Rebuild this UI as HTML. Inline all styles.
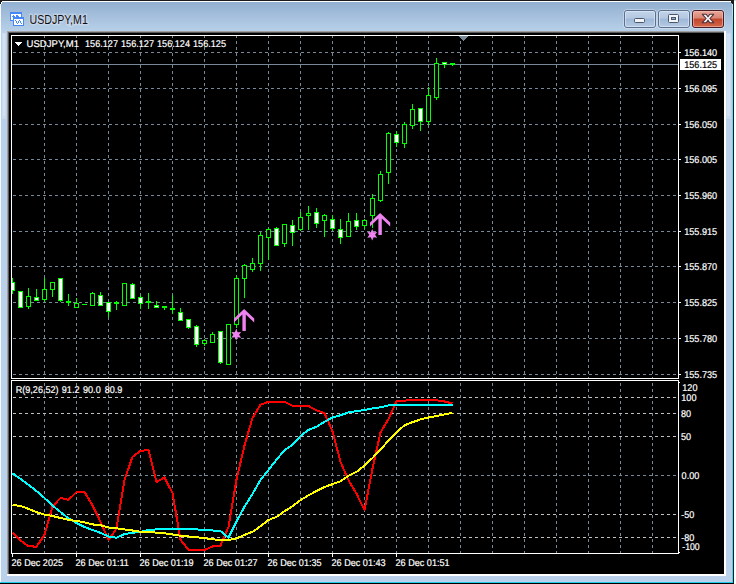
<!DOCTYPE html>
<html lang="en"><head><meta charset="utf-8"><title>USDJPY,M1</title>
<style>
html,body{margin:0;padding:0;background:#fff;overflow:hidden}
body{width:736px;height:584px;position:relative;font-family:"Liberation Sans",sans-serif}
svg{position:absolute;left:0;top:0;display:block}
text{font-family:"Liberation Sans",sans-serif}
.t{font-size:9.33px;fill:#fff}
</style></head><body>
<svg width="736" height="584" viewBox="0 0 736 584">
<defs>
<linearGradient id="tb" x1="0" y1="0" x2="0" y2="1"><stop offset="0" stop-color="#93b0d1"/><stop offset="1" stop-color="#b9d1ea"/></linearGradient>
<linearGradient id="btn" x1="0" y1="0" x2="0" y2="1"><stop offset="0" stop-color="#c3d4e9"/><stop offset="0.45" stop-color="#b4c8e2"/><stop offset="0.5" stop-color="#9fb8d8"/><stop offset="1" stop-color="#b6cbe4"/></linearGradient>
<linearGradient id="cls" x1="0" y1="0" x2="0" y2="1"><stop offset="0" stop-color="#e9a99b"/><stop offset="0.45" stop-color="#d98573"/><stop offset="0.5" stop-color="#c1452b"/><stop offset="1" stop-color="#d4694c"/></linearGradient>
<linearGradient id="side" x1="0" y1="0" x2="0" y2="1"><stop offset="0" stop-color="#d3e1f1"/><stop offset="0.9" stop-color="#cfdef0"/><stop offset="1" stop-color="#b9d1ea"/></linearGradient>
<linearGradient id="cy" x1="0" y1="0" x2="0" y2="1"><stop offset="0" stop-color="#b8f0fc"/><stop offset="0.05" stop-color="#62dcfa"/><stop offset="1" stop-color="#3ad6f6"/></linearGradient>
<clipPath id="cpm"><rect x="12" y="36" width="666" height="342"/></clipPath>
<clipPath id="cpi"><rect x="12" y="381" width="666" height="172"/></clipPath>
</defs>
<g shape-rendering="crispEdges">
<rect x="0" y="0" width="736" height="584" fill="#ffffff"/>
<rect x="0" y="0" width="734" height="1" fill="#1c1c1c"/>
<rect x="0" y="1" width="733" height="581" fill="#b9d1ea"/>
<rect x="0" y="2" width="733" height="30" fill="url(#tb)"/>
<rect x="0" y="1" width="732" height="1" fill="#ffffff"/>
<rect x="0" y="2" width="1" height="580" fill="#f7fafd"/>
<rect x="732" y="3" width="1" height="580" fill="url(#cy)"/>
<rect x="733" y="2" width="1" height="582" fill="#1c1c1c"/>
<rect x="0" y="582" width="733" height="1" fill="#1fcdeb"/>
<rect x="0" y="583" width="734" height="1" fill="#000000"/>
<rect x="2" y="33" width="4" height="86" fill="#c7daee"/><rect x="3" y="34" width="2" height="82" fill="#d3e2f2"/>
<rect x="726" y="33" width="5" height="86" fill="#c7daee"/><rect x="727" y="34" width="3" height="82" fill="#d3e2f2"/>
<rect x="0" y="0" width="2" height="2" fill="#1c1c1c"/><rect x="0" y="2" width="1" height="2" fill="#1c1c1c"/><rect x="2" y="0" width="1" height="1" fill="#1c1c1c"/>
<rect x="1" y="2" width="1" height="2" fill="#ffffff"/><rect x="2" y="1" width="2" height="1" fill="#ffffff"/>
<rect x="731" y="1" width="3" height="2" fill="#1c1c1c"/><rect x="732" y="3" width="1" height="1" fill="#1c1c1c"/>
<rect x="734" y="0" width="2" height="1" fill="#d8d8d8"/>
<rect x="7" y="31" width="719" height="545" fill="#a0a0a0"/>
<rect x="8" y="32" width="718" height="544" fill="#5a5a5a"/>
<rect x="9" y="33" width="717" height="543" fill="#ffffff"/>
<rect x="7" y="575" width="1" height="1" fill="#ffffff"/><rect x="7" y="574" width="2" height="2" fill="#ffffff"/>
<rect x="725" y="31" width="1" height="1" fill="#ffffff"/><rect x="724" y="31" width="2" height="2" fill="#ffffff"/>
<rect x="9" y="33" width="715" height="541" fill="#000000"/>
</g>
<g shape-rendering="crispEdges" fill="none" stroke-width="1">
<line x1="44.5" y1="35" x2="44.5" y2="378" stroke="#778899" stroke-dasharray="3 3"/>
<line x1="44.5" y1="377" x2="44.5" y2="553" stroke="#778899" stroke-dasharray="3 3"/>
<line x1="76.5" y1="35" x2="76.5" y2="378" stroke="#778899" stroke-dasharray="3 3"/>
<line x1="76.5" y1="377" x2="76.5" y2="553" stroke="#778899" stroke-dasharray="3 3"/>
<line x1="108.5" y1="35" x2="108.5" y2="378" stroke="#778899" stroke-dasharray="3 3"/>
<line x1="108.5" y1="377" x2="108.5" y2="553" stroke="#778899" stroke-dasharray="3 3"/>
<line x1="140.5" y1="35" x2="140.5" y2="378" stroke="#778899" stroke-dasharray="3 3"/>
<line x1="140.5" y1="377" x2="140.5" y2="553" stroke="#778899" stroke-dasharray="3 3"/>
<line x1="172.5" y1="35" x2="172.5" y2="378" stroke="#778899" stroke-dasharray="3 3"/>
<line x1="172.5" y1="377" x2="172.5" y2="553" stroke="#778899" stroke-dasharray="3 3"/>
<line x1="204.5" y1="35" x2="204.5" y2="378" stroke="#778899" stroke-dasharray="3 3"/>
<line x1="204.5" y1="377" x2="204.5" y2="553" stroke="#778899" stroke-dasharray="3 3"/>
<line x1="236.5" y1="35" x2="236.5" y2="378" stroke="#778899" stroke-dasharray="3 3"/>
<line x1="236.5" y1="377" x2="236.5" y2="553" stroke="#778899" stroke-dasharray="3 3"/>
<line x1="268.5" y1="35" x2="268.5" y2="378" stroke="#778899" stroke-dasharray="3 3"/>
<line x1="268.5" y1="377" x2="268.5" y2="553" stroke="#778899" stroke-dasharray="3 3"/>
<line x1="300.5" y1="35" x2="300.5" y2="378" stroke="#778899" stroke-dasharray="3 3"/>
<line x1="300.5" y1="377" x2="300.5" y2="553" stroke="#778899" stroke-dasharray="3 3"/>
<line x1="332.5" y1="35" x2="332.5" y2="378" stroke="#778899" stroke-dasharray="3 3"/>
<line x1="332.5" y1="377" x2="332.5" y2="553" stroke="#778899" stroke-dasharray="3 3"/>
<line x1="364.5" y1="35" x2="364.5" y2="378" stroke="#778899" stroke-dasharray="3 3"/>
<line x1="364.5" y1="377" x2="364.5" y2="553" stroke="#778899" stroke-dasharray="3 3"/>
<line x1="396.5" y1="35" x2="396.5" y2="378" stroke="#778899" stroke-dasharray="3 3"/>
<line x1="396.5" y1="377" x2="396.5" y2="553" stroke="#778899" stroke-dasharray="3 3"/>
<line x1="428.5" y1="35" x2="428.5" y2="378" stroke="#778899" stroke-dasharray="3 3"/>
<line x1="428.5" y1="377" x2="428.5" y2="553" stroke="#778899" stroke-dasharray="3 3"/>
<line x1="460.5" y1="35" x2="460.5" y2="378" stroke="#778899" stroke-dasharray="3 3"/>
<line x1="460.5" y1="377" x2="460.5" y2="553" stroke="#778899" stroke-dasharray="3 3"/>
<line x1="492.5" y1="35" x2="492.5" y2="378" stroke="#778899" stroke-dasharray="3 3"/>
<line x1="492.5" y1="377" x2="492.5" y2="553" stroke="#778899" stroke-dasharray="3 3"/>
<line x1="524.5" y1="35" x2="524.5" y2="378" stroke="#778899" stroke-dasharray="3 3"/>
<line x1="524.5" y1="377" x2="524.5" y2="553" stroke="#778899" stroke-dasharray="3 3"/>
<line x1="556.5" y1="35" x2="556.5" y2="378" stroke="#778899" stroke-dasharray="3 3"/>
<line x1="556.5" y1="377" x2="556.5" y2="553" stroke="#778899" stroke-dasharray="3 3"/>
<line x1="588.5" y1="35" x2="588.5" y2="378" stroke="#778899" stroke-dasharray="3 3"/>
<line x1="588.5" y1="377" x2="588.5" y2="553" stroke="#778899" stroke-dasharray="3 3"/>
<line x1="620.5" y1="35" x2="620.5" y2="378" stroke="#778899" stroke-dasharray="3 3"/>
<line x1="620.5" y1="377" x2="620.5" y2="553" stroke="#778899" stroke-dasharray="3 3"/>
<line x1="652.5" y1="35" x2="652.5" y2="378" stroke="#778899" stroke-dasharray="3 3"/>
<line x1="652.5" y1="377" x2="652.5" y2="553" stroke="#778899" stroke-dasharray="3 3"/>
<line x1="13" y1="52.5" x2="678" y2="52.5" stroke="#778899" stroke-dasharray="3 3"/>
<line x1="13" y1="88.5" x2="678" y2="88.5" stroke="#778899" stroke-dasharray="3 3"/>
<line x1="13" y1="124.5" x2="678" y2="124.5" stroke="#778899" stroke-dasharray="3 3"/>
<line x1="13" y1="159.5" x2="678" y2="159.5" stroke="#778899" stroke-dasharray="3 3"/>
<line x1="13" y1="195.5" x2="678" y2="195.5" stroke="#778899" stroke-dasharray="3 3"/>
<line x1="13" y1="231.5" x2="678" y2="231.5" stroke="#778899" stroke-dasharray="3 3"/>
<line x1="13" y1="266.5" x2="678" y2="266.5" stroke="#778899" stroke-dasharray="3 3"/>
<line x1="13" y1="302.5" x2="678" y2="302.5" stroke="#778899" stroke-dasharray="3 3"/>
<line x1="13" y1="338.5" x2="678" y2="338.5" stroke="#778899" stroke-dasharray="3 3"/>
<line x1="13" y1="374.5" x2="678" y2="374.5" stroke="#778899" stroke-dasharray="3 3"/>
<rect x="9" y="379" width="672" height="1" fill="#000" stroke="none"/>
<line x1="13" y1="397.5" x2="678" y2="397.5" stroke="#c0c0c0" stroke-dasharray="3 3"/>
<line x1="13" y1="413.5" x2="678" y2="413.5" stroke="#c0c0c0" stroke-dasharray="3 3"/>
<line x1="13" y1="436.5" x2="678" y2="436.5" stroke="#c0c0c0" stroke-dasharray="3 3"/>
<line x1="13" y1="475.5" x2="678" y2="475.5" stroke="#778899" stroke-dasharray="3 3"/>
<line x1="13" y1="514.5" x2="678" y2="514.5" stroke="#c0c0c0" stroke-dasharray="3 3"/>
<line x1="13" y1="537.5" x2="678" y2="537.5" stroke="#c0c0c0" stroke-dasharray="3 3"/>
<line x1="12" y1="64.5" x2="678" y2="64.5" stroke="#778899"/>
</g>
<g shape-rendering="crispEdges" clip-path="url(#cpm)">
<rect x="12" y="278" width="1" height="4" fill="#00ff00"/>
<rect x="12" y="291" width="1" height="3" fill="#00ff00"/>
<rect x="10" y="282" width="5" height="9" fill="#00ff00"/>
<rect x="11" y="283" width="3" height="7" fill="#ffffff"/>
<rect x="18" y="291" width="5" height="17" fill="#00ff00"/>
<rect x="19" y="292" width="3" height="15" fill="#ffffff"/>
<rect x="28" y="288" width="1" height="8" fill="#00ff00"/>
<rect x="28" y="307" width="1" height="2" fill="#00ff00"/>
<rect x="26.5" y="296.5" width="4" height="10" fill="#000" stroke="#00ff00" stroke-width="1"/>
<rect x="36" y="289" width="1" height="8" fill="#00ff00"/>
<rect x="34" y="297" width="5" height="4" fill="#00ff00"/>
<rect x="35" y="298" width="3" height="2" fill="#ffffff"/>
<rect x="44" y="278" width="1" height="11" fill="#00ff00"/>
<rect x="44" y="300" width="1" height="2" fill="#00ff00"/>
<rect x="42.5" y="289.5" width="4" height="10" fill="#000" stroke="#00ff00" stroke-width="1"/>
<rect x="52" y="290" width="1" height="7" fill="#00ff00"/>
<rect x="50.5" y="282.5" width="4" height="7" fill="#000" stroke="#00ff00" stroke-width="1"/>
<rect x="60" y="301" width="1" height="1" fill="#00ff00"/>
<rect x="58" y="278" width="5" height="23" fill="#00ff00"/>
<rect x="59" y="279" width="3" height="21" fill="#ffffff"/>
<rect x="68" y="294" width="1" height="7" fill="#00ff00"/>
<rect x="68" y="303" width="1" height="3" fill="#00ff00"/>
<rect x="66" y="301" width="5" height="2" fill="#00ff00"/>
<rect x="76" y="298" width="1" height="5" fill="#00ff00"/>
<rect x="74.5" y="303.5" width="4" height="4" fill="#000" stroke="#00ff00" stroke-width="1"/>
<rect x="82" y="304" width="5" height="1" fill="#00ff00"/>
<rect x="92" y="292" width="1" height="1" fill="#00ff00"/>
<rect x="90.5" y="293.5" width="4" height="12" fill="#000" stroke="#00ff00" stroke-width="1"/>
<rect x="100" y="292" width="1" height="3" fill="#00ff00"/>
<rect x="98" y="295" width="5" height="11" fill="#00ff00"/>
<rect x="99" y="296" width="3" height="9" fill="#ffffff"/>
<rect x="108" y="312" width="1" height="5" fill="#00ff00"/>
<rect x="106" y="302" width="5" height="10" fill="#00ff00"/>
<rect x="107" y="303" width="3" height="8" fill="#ffffff"/>
<rect x="116" y="301" width="1" height="1" fill="#00ff00"/>
<rect x="116" y="304" width="1" height="6" fill="#00ff00"/>
<rect x="114" y="302" width="5" height="2" fill="#00ff00"/>
<rect x="122.5" y="283.5" width="4" height="22" fill="#000" stroke="#00ff00" stroke-width="1"/>
<rect x="132" y="283" width="1" height="1" fill="#00ff00"/>
<rect x="130" y="284" width="5" height="15" fill="#00ff00"/>
<rect x="131" y="285" width="3" height="13" fill="#ffffff"/>
<rect x="140" y="295" width="1" height="2" fill="#00ff00"/>
<rect x="140" y="304" width="1" height="5" fill="#00ff00"/>
<rect x="138" y="297" width="5" height="7" fill="#00ff00"/>
<rect x="139" y="298" width="3" height="5" fill="#ffffff"/>
<rect x="148" y="293" width="1" height="8" fill="#00ff00"/>
<rect x="148" y="303" width="1" height="6" fill="#00ff00"/>
<rect x="146" y="301" width="5" height="2" fill="#00ff00"/>
<rect x="156" y="301" width="1" height="4" fill="#00ff00"/>
<rect x="154" y="305" width="5" height="3" fill="#00ff00"/>
<rect x="155" y="306" width="3" height="1" fill="#ffffff"/>
<rect x="164" y="308" width="1" height="2" fill="#00ff00"/>
<rect x="162" y="306" width="5" height="2" fill="#00ff00"/>
<rect x="172" y="295" width="1" height="13" fill="#00ff00"/>
<rect x="172" y="310" width="1" height="4" fill="#00ff00"/>
<rect x="170" y="308" width="5" height="2" fill="#00ff00"/>
<rect x="180" y="308" width="1" height="4" fill="#00ff00"/>
<rect x="178" y="312" width="5" height="9" fill="#00ff00"/>
<rect x="179" y="313" width="3" height="7" fill="#ffffff"/>
<rect x="188" y="328" width="1" height="1" fill="#00ff00"/>
<rect x="186" y="319" width="5" height="9" fill="#00ff00"/>
<rect x="187" y="320" width="3" height="7" fill="#ffffff"/>
<rect x="196" y="325" width="1" height="1" fill="#00ff00"/>
<rect x="196" y="345" width="1" height="2" fill="#00ff00"/>
<rect x="194" y="326" width="5" height="19" fill="#00ff00"/>
<rect x="195" y="327" width="3" height="17" fill="#ffffff"/>
<rect x="204" y="339" width="1" height="1" fill="#00ff00"/>
<rect x="204" y="344" width="1" height="2" fill="#00ff00"/>
<rect x="202.5" y="340.5" width="4" height="3" fill="#000" stroke="#00ff00" stroke-width="1"/>
<rect x="212" y="332" width="1" height="2" fill="#00ff00"/>
<rect x="210.5" y="334.5" width="4" height="8" fill="#000" stroke="#00ff00" stroke-width="1"/>
<rect x="220" y="363" width="1" height="1" fill="#00ff00"/>
<rect x="218" y="331" width="5" height="32" fill="#00ff00"/>
<rect x="219" y="332" width="3" height="30" fill="#ffffff"/>
<rect x="226.5" y="324.5" width="4" height="40" fill="#000" stroke="#00ff00" stroke-width="1"/>
<rect x="236" y="276" width="1" height="2" fill="#00ff00"/>
<rect x="236" y="325" width="1" height="3" fill="#00ff00"/>
<rect x="234.5" y="278.5" width="4" height="46" fill="#000" stroke="#00ff00" stroke-width="1"/>
<rect x="244" y="264" width="1" height="1" fill="#00ff00"/>
<rect x="244" y="279" width="1" height="19" fill="#00ff00"/>
<rect x="242.5" y="265.5" width="4" height="13" fill="#000" stroke="#00ff00" stroke-width="1"/>
<rect x="252" y="258" width="1" height="5" fill="#00ff00"/>
<rect x="252" y="270" width="1" height="2" fill="#00ff00"/>
<rect x="250.5" y="263.5" width="4" height="6" fill="#000" stroke="#00ff00" stroke-width="1"/>
<rect x="260" y="232" width="1" height="3" fill="#00ff00"/>
<rect x="260" y="264" width="1" height="7" fill="#00ff00"/>
<rect x="258.5" y="235.5" width="4" height="28" fill="#000" stroke="#00ff00" stroke-width="1"/>
<rect x="268" y="228" width="1" height="1" fill="#00ff00"/>
<rect x="268" y="238" width="1" height="22" fill="#00ff00"/>
<rect x="266.5" y="229.5" width="4" height="8" fill="#000" stroke="#00ff00" stroke-width="1"/>
<rect x="276" y="227" width="1" height="1" fill="#00ff00"/>
<rect x="274" y="228" width="5" height="18" fill="#00ff00"/>
<rect x="275" y="229" width="3" height="16" fill="#ffffff"/>
<rect x="284" y="244" width="1" height="3" fill="#00ff00"/>
<rect x="282.5" y="224.5" width="4" height="19" fill="#000" stroke="#00ff00" stroke-width="1"/>
<rect x="292" y="220" width="1" height="5" fill="#00ff00"/>
<rect x="292" y="233" width="1" height="13" fill="#00ff00"/>
<rect x="290" y="225" width="5" height="8" fill="#00ff00"/>
<rect x="291" y="226" width="3" height="6" fill="#ffffff"/>
<rect x="300" y="212" width="1" height="5" fill="#00ff00"/>
<rect x="300" y="230" width="1" height="1" fill="#00ff00"/>
<rect x="298.5" y="217.5" width="4" height="12" fill="#000" stroke="#00ff00" stroke-width="1"/>
<rect x="308" y="206" width="1" height="7" fill="#00ff00"/>
<rect x="308" y="216" width="1" height="14" fill="#00ff00"/>
<rect x="306.5" y="213.5" width="4" height="2" fill="#000" stroke="#00ff00" stroke-width="1"/>
<rect x="316" y="208" width="1" height="4" fill="#00ff00"/>
<rect x="316" y="224" width="1" height="4" fill="#00ff00"/>
<rect x="314" y="212" width="5" height="12" fill="#00ff00"/>
<rect x="315" y="213" width="3" height="10" fill="#ffffff"/>
<rect x="324" y="214" width="1" height="1" fill="#00ff00"/>
<rect x="324" y="221" width="1" height="16" fill="#00ff00"/>
<rect x="322.5" y="215.5" width="4" height="5" fill="#000" stroke="#00ff00" stroke-width="1"/>
<rect x="332" y="215" width="1" height="4" fill="#00ff00"/>
<rect x="332" y="229" width="1" height="2" fill="#00ff00"/>
<rect x="330" y="219" width="5" height="10" fill="#00ff00"/>
<rect x="331" y="220" width="3" height="8" fill="#ffffff"/>
<rect x="340" y="219" width="1" height="10" fill="#00ff00"/>
<rect x="340" y="238" width="1" height="6" fill="#00ff00"/>
<rect x="338" y="229" width="5" height="9" fill="#00ff00"/>
<rect x="339" y="230" width="3" height="7" fill="#ffffff"/>
<rect x="348" y="213" width="1" height="8" fill="#00ff00"/>
<rect x="346.5" y="221.5" width="4" height="15" fill="#000" stroke="#00ff00" stroke-width="1"/>
<rect x="356" y="213" width="1" height="7" fill="#00ff00"/>
<rect x="356" y="227" width="1" height="3" fill="#00ff00"/>
<rect x="354" y="220" width="5" height="7" fill="#00ff00"/>
<rect x="355" y="221" width="3" height="5" fill="#ffffff"/>
<rect x="364" y="219" width="1" height="1" fill="#00ff00"/>
<rect x="364" y="226" width="1" height="3" fill="#00ff00"/>
<rect x="362.5" y="220.5" width="4" height="5" fill="#000" stroke="#00ff00" stroke-width="1"/>
<rect x="372" y="194" width="1" height="4" fill="#00ff00"/>
<rect x="372" y="216" width="1" height="12" fill="#00ff00"/>
<rect x="370.5" y="198.5" width="4" height="17" fill="#000" stroke="#00ff00" stroke-width="1"/>
<rect x="380" y="171" width="1" height="3" fill="#00ff00"/>
<rect x="380" y="201" width="1" height="1" fill="#00ff00"/>
<rect x="378.5" y="174.5" width="4" height="26" fill="#000" stroke="#00ff00" stroke-width="1"/>
<rect x="388" y="132" width="1" height="1" fill="#00ff00"/>
<rect x="388" y="173" width="1" height="11" fill="#00ff00"/>
<rect x="386.5" y="133.5" width="4" height="39" fill="#000" stroke="#00ff00" stroke-width="1"/>
<rect x="396" y="131" width="1" height="3" fill="#00ff00"/>
<rect x="396" y="143" width="1" height="4" fill="#00ff00"/>
<rect x="394" y="134" width="5" height="9" fill="#00ff00"/>
<rect x="395" y="135" width="3" height="7" fill="#ffffff"/>
<rect x="404" y="122" width="1" height="2" fill="#00ff00"/>
<rect x="404" y="144" width="1" height="4" fill="#00ff00"/>
<rect x="402.5" y="124.5" width="4" height="19" fill="#000" stroke="#00ff00" stroke-width="1"/>
<rect x="412" y="104" width="1" height="5" fill="#00ff00"/>
<rect x="412" y="126" width="1" height="3" fill="#00ff00"/>
<rect x="410.5" y="109.5" width="4" height="16" fill="#000" stroke="#00ff00" stroke-width="1"/>
<rect x="420" y="122" width="1" height="9" fill="#00ff00"/>
<rect x="418" y="108" width="5" height="14" fill="#00ff00"/>
<rect x="419" y="109" width="3" height="12" fill="#ffffff"/>
<rect x="428" y="87" width="1" height="8" fill="#00ff00"/>
<rect x="428" y="122" width="1" height="3" fill="#00ff00"/>
<rect x="426.5" y="95.5" width="4" height="26" fill="#000" stroke="#00ff00" stroke-width="1"/>
<rect x="436" y="58" width="1" height="5" fill="#00ff00"/>
<rect x="436" y="98" width="1" height="2" fill="#00ff00"/>
<rect x="434.5" y="63.5" width="4" height="34" fill="#000" stroke="#00ff00" stroke-width="1"/>
<rect x="444" y="65" width="1" height="3" fill="#00ff00"/>
<rect x="442" y="62" width="5" height="3" fill="#00ff00"/>
<rect x="443" y="63" width="3" height="1" fill="#ffffff"/>
<rect x="452" y="65" width="1" height="1" fill="#00ff00"/>
<rect x="450" y="63" width="5" height="2" fill="#00ff00"/>
</g>
<g>
<polygon fill="#ee82ee" points="244.1,309.0 254.2,318.6 254.2,322.6 245.8,314.6 245.8,331.0 242.4,331.0 242.4,314.6 234.0,322.6 234.0,318.6"/>
<polygon fill="#ee82ee" points="380.1,213.0 390.2,222.6 390.2,226.6 381.8,218.6 381.8,235.0 378.4,235.0 378.4,218.6 370.0,226.6 370.0,222.6"/>
<polygon fill="#ee82ee" points="236.20,329.10 237.65,332.29 241.14,331.95 239.10,334.80 241.14,337.65 237.65,337.31 236.20,340.50 234.75,337.31 231.26,337.65 233.30,334.80 231.26,331.95 234.75,332.29"/>
<polygon fill="#ee82ee" points="372.20,229.10 373.65,232.29 377.14,231.95 375.10,234.80 377.14,237.65 373.65,237.31 372.20,240.50 370.75,237.31 367.26,237.65 369.30,234.80 367.26,231.95 370.75,232.29"/>
</g>
<g shape-rendering="crispEdges" clip-path="url(#cpi)">
<polyline points="12.5,532.80 20.5,540.40 28.5,546.20 36.5,546.70 44.5,534.80 52.5,506.50 60.5,497.90 68.5,499.80 76.5,492.10 84.5,492.10 92.5,505.20 100.5,521.80 108.5,540.00 116.5,528.60 124.5,480.00 132.5,456.80 140.5,450.80 148.5,450.20 156.5,482.00 164.5,477.50 172.5,493.10 180.5,539.60 188.5,549.90 196.5,549.90 204.5,549.90 212.5,546.50 220.5,545.60 228.5,527.00 236.5,479.60 244.5,445.50 252.5,417.90 260.5,404.80 268.5,401.80 276.5,401.80 284.5,401.80 292.5,405.70 300.5,405.70 308.5,406.10 316.5,410.30 324.5,413.20 332.5,431.30 340.5,461.80 348.5,480.20 356.5,493.60 364.5,510.10 372.5,468.60 380.5,432.60 388.5,419.00 396.5,401.20 404.5,400.70 412.5,399.90 420.5,399.75 428.5,399.75 436.5,400.25 444.5,401.50 452.5,403.50" fill="none" stroke="#ff0000" stroke-width="2" stroke-linejoin="round"/>
<polyline points="12.5,473.30 20.5,478.80 28.5,484.80 36.5,491.00 44.5,498.00 52.5,505.60 60.5,512.00 68.5,518.40 76.5,523.00 84.5,527.00 92.5,530.00 100.5,532.80 108.5,536.50 116.5,537.80 124.5,534.10 132.5,532.90 140.5,531.80 148.5,529.90 156.5,529.40 164.5,528.90 172.5,528.60 180.5,528.60 188.5,528.60 196.5,529.40 204.5,529.90 212.5,530.50 220.5,531.00 228.5,537.80 236.5,521.50 244.5,506.60 252.5,493.90 260.5,479.80 268.5,470.10 276.5,459.60 284.5,450.20 292.5,444.70 300.5,436.00 308.5,430.00 316.5,426.70 324.5,421.80 332.5,417.40 340.5,415.20 348.5,412.40 356.5,411.10 364.5,410.00 372.5,408.40 380.5,407.30 388.5,405.30 396.5,404.80 404.5,404.80 412.5,404.80 420.5,404.80 428.5,404.80 436.5,404.80 444.5,404.80 452.5,404.80" fill="none" stroke="#00ffff" stroke-width="2" stroke-linejoin="round"/>
<polyline points="12.5,505.00 20.5,505.90 28.5,508.80 36.5,512.20 44.5,514.60 52.5,516.00 60.5,518.00 68.5,519.80 76.5,521.00 84.5,522.30 92.5,524.40 100.5,525.20 108.5,527.40 116.5,528.30 124.5,529.40 132.5,530.50 140.5,531.80 148.5,532.10 156.5,532.60 164.5,533.30 172.5,534.40 180.5,535.70 188.5,536.50 196.5,537.30 204.5,538.10 212.5,539.30 220.5,540.00 228.5,540.00 236.5,538.40 244.5,534.90 252.5,531.80 260.5,526.30 268.5,520.00 276.5,516.80 284.5,511.30 292.5,506.20 300.5,500.20 308.5,495.20 316.5,491.10 324.5,487.00 332.5,484.10 340.5,481.30 348.5,475.70 356.5,471.90 364.5,465.60 372.5,458.00 380.5,449.40 388.5,440.70 396.5,432.40 404.5,425.20 412.5,422.20 420.5,419.40 428.5,417.50 436.5,416.00 444.5,414.40 452.5,412.75" fill="none" stroke="#ffff00" stroke-width="2" stroke-linejoin="round"/>
</g>
<g shape-rendering="crispEdges">
<rect x="11.5" y="35.5" width="667" height="343" fill="none" stroke="#fff"/>
<rect x="11.5" y="380.5" width="667" height="173" fill="none" stroke="#fff"/>
<polygon points="459,36 468,36 463.5,40.5" fill="#778899" shape-rendering="auto"/>
<rect x="459" y="36" width="9" height="1" fill="#778899"/>
<rect x="460" y="37" width="7" height="1" fill="#778899"/>
<rect x="461" y="38" width="5" height="1" fill="#778899"/>
<rect x="462" y="39" width="3" height="1" fill="#778899"/>
<rect x="463" y="40" width="1" height="1" fill="#778899"/>
<rect x="679" y="52" width="2" height="1" fill="#fff"/>
<rect x="679" y="88" width="2" height="1" fill="#fff"/>
<rect x="679" y="124" width="2" height="1" fill="#fff"/>
<rect x="679" y="159" width="2" height="1" fill="#fff"/>
<rect x="679" y="195" width="2" height="1" fill="#fff"/>
<rect x="679" y="231" width="2" height="1" fill="#fff"/>
<rect x="679" y="266" width="2" height="1" fill="#fff"/>
<rect x="679" y="302" width="2" height="1" fill="#fff"/>
<rect x="679" y="338" width="2" height="1" fill="#fff"/>
<rect x="679" y="374" width="2" height="1" fill="#fff"/>
<rect x="679" y="382" width="1" height="1" fill="#fff"/>
<rect x="679" y="552" width="1" height="1" fill="#fff"/>
<rect x="12" y="554" width="1" height="3" fill="#fff"/>
<rect x="76" y="554" width="1" height="3" fill="#fff"/>
<rect x="140" y="554" width="1" height="3" fill="#fff"/>
<rect x="204" y="554" width="1" height="3" fill="#fff"/>
<rect x="268" y="554" width="1" height="3" fill="#fff"/>
<rect x="332" y="554" width="1" height="3" fill="#fff"/>
<rect x="396" y="554" width="1" height="3" fill="#fff"/>
<rect x="680" y="59" width="41" height="11" fill="#fff"/>
<rect x="15" y="42" width="7" height="1" fill="#fff"/>
<rect x="16" y="43" width="5" height="1" fill="#fff"/>
<rect x="17" y="44" width="3" height="1" fill="#fff"/>
<rect x="18" y="45" width="1" height="1" fill="#fff"/>
</g>
<text x="26.6" y="47" font-size="9.8" text-rendering="geometricPrecision" fill="#fff" stroke="#fff" stroke-width="0.2" textLength="52.4" lengthAdjust="spacingAndGlyphs">USDJPY,M1</text>
<text x="85" y="47" font-size="9.8" text-rendering="geometricPrecision" fill="#fff" stroke="#fff" stroke-width="0.2" textLength="33.0" lengthAdjust="spacingAndGlyphs">156.127</text>
<text x="121" y="47" font-size="9.8" text-rendering="geometricPrecision" fill="#fff" stroke="#fff" stroke-width="0.2" textLength="33.0" lengthAdjust="spacingAndGlyphs">156.127</text>
<text x="157" y="47" font-size="9.8" text-rendering="geometricPrecision" fill="#fff" stroke="#fff" stroke-width="0.2" textLength="33.0" lengthAdjust="spacingAndGlyphs">156.124</text>
<text x="193" y="47" font-size="9.8" text-rendering="geometricPrecision" fill="#fff" stroke="#fff" stroke-width="0.2" textLength="33.0" lengthAdjust="spacingAndGlyphs">156.125</text>
<text x="684.2" y="56" font-size="9.8" text-rendering="geometricPrecision" fill="#fff" stroke="#fff" stroke-width="0.2" textLength="33.0" lengthAdjust="spacingAndGlyphs">156.140</text>
<text x="684.2" y="92" font-size="9.8" text-rendering="geometricPrecision" fill="#fff" stroke="#fff" stroke-width="0.2" textLength="33.0" lengthAdjust="spacingAndGlyphs">156.095</text>
<text x="684.2" y="128" font-size="9.8" text-rendering="geometricPrecision" fill="#fff" stroke="#fff" stroke-width="0.2" textLength="33.0" lengthAdjust="spacingAndGlyphs">156.050</text>
<text x="684.2" y="163" font-size="9.8" text-rendering="geometricPrecision" fill="#fff" stroke="#fff" stroke-width="0.2" textLength="33.0" lengthAdjust="spacingAndGlyphs">156.005</text>
<text x="684.2" y="199" font-size="9.8" text-rendering="geometricPrecision" fill="#fff" stroke="#fff" stroke-width="0.2" textLength="33.0" lengthAdjust="spacingAndGlyphs">155.960</text>
<text x="684.2" y="235" font-size="9.8" text-rendering="geometricPrecision" fill="#fff" stroke="#fff" stroke-width="0.2" textLength="33.0" lengthAdjust="spacingAndGlyphs">155.915</text>
<text x="684.2" y="270" font-size="9.8" text-rendering="geometricPrecision" fill="#fff" stroke="#fff" stroke-width="0.2" textLength="33.0" lengthAdjust="spacingAndGlyphs">155.870</text>
<text x="684.2" y="306" font-size="9.8" text-rendering="geometricPrecision" fill="#fff" stroke="#fff" stroke-width="0.2" textLength="33.0" lengthAdjust="spacingAndGlyphs">155.825</text>
<text x="684.2" y="342" font-size="9.8" text-rendering="geometricPrecision" fill="#fff" stroke="#fff" stroke-width="0.2" textLength="33.0" lengthAdjust="spacingAndGlyphs">155.780</text>
<text x="684.2" y="378" font-size="9.8" text-rendering="geometricPrecision" fill="#fff" stroke="#fff" stroke-width="0.2" textLength="33.0" lengthAdjust="spacingAndGlyphs">155.735</text>
<text x="684.2" y="68" font-size="9.8" text-rendering="geometricPrecision" fill="#000" stroke="#000" stroke-width="0.2" textLength="33.0" lengthAdjust="spacingAndGlyphs">156.125</text>
<text x="15.7" y="393" font-size="9.8" text-rendering="geometricPrecision" fill="#fff" stroke="#fff" stroke-width="0.2" textLength="42.9" lengthAdjust="spacingAndGlyphs">R(9,26,52)</text>
<text x="61.8" y="393" font-size="9.8" text-rendering="geometricPrecision" fill="#fff" stroke="#fff" stroke-width="0.2" textLength="17.7" lengthAdjust="spacingAndGlyphs">91.2</text>
<text x="83.0" y="393" font-size="9.8" text-rendering="geometricPrecision" fill="#fff" stroke="#fff" stroke-width="0.2" textLength="17.7" lengthAdjust="spacingAndGlyphs">90.0</text>
<text x="104.7" y="393" font-size="9.8" text-rendering="geometricPrecision" fill="#fff" stroke="#fff" stroke-width="0.2" textLength="17.7" lengthAdjust="spacingAndGlyphs">80.9</text>
<text x="682.3" y="391" font-size="9.8" text-rendering="geometricPrecision" fill="#fff" stroke="#fff" stroke-width="0.2" textLength="15.2" lengthAdjust="spacingAndGlyphs">120</text>
<text x="681.3" y="401" font-size="9.8" text-rendering="geometricPrecision" fill="#fff" stroke="#fff" stroke-width="0.2" textLength="15.2" lengthAdjust="spacingAndGlyphs">100</text>
<text x="681.0" y="417" font-size="9.8" text-rendering="geometricPrecision" fill="#fff" stroke="#fff" stroke-width="0.2" textLength="10.1" lengthAdjust="spacingAndGlyphs">80</text>
<text x="681.0" y="440" font-size="9.8" text-rendering="geometricPrecision" fill="#fff" stroke="#fff" stroke-width="0.2" textLength="10.1" lengthAdjust="spacingAndGlyphs">50</text>
<text x="681.6" y="479" font-size="9.8" text-rendering="geometricPrecision" fill="#fff" stroke="#fff" stroke-width="0.2" textLength="17.7" lengthAdjust="spacingAndGlyphs">0.00</text>
<text x="681.3" y="518" font-size="9.8" text-rendering="geometricPrecision" fill="#fff" stroke="#fff" stroke-width="0.2" textLength="13.1" lengthAdjust="spacingAndGlyphs">-50</text>
<text x="681.3" y="541" font-size="9.8" text-rendering="geometricPrecision" fill="#fff" stroke="#fff" stroke-width="0.2" textLength="13.1" lengthAdjust="spacingAndGlyphs">-80</text>
<text x="682.3" y="550" font-size="9.8" text-rendering="geometricPrecision" fill="#fff" stroke="#fff" stroke-width="0.2" textLength="17.4" lengthAdjust="spacingAndGlyphs">-100</text>
<text x="11.5" y="566" font-size="9.8" text-rendering="geometricPrecision" fill="#fff" stroke="#fff" stroke-width="0.2" textLength="51.6" lengthAdjust="spacingAndGlyphs">26 Dec 2025</text>
<text x="75.5" y="566" font-size="9.8" text-rendering="geometricPrecision" fill="#fff" stroke="#fff" stroke-width="0.2" textLength="53.4" lengthAdjust="spacingAndGlyphs">26 Dec 01:11</text>
<text x="139.5" y="566" font-size="9.8" text-rendering="geometricPrecision" fill="#fff" stroke="#fff" stroke-width="0.2" textLength="54.1" lengthAdjust="spacingAndGlyphs">26 Dec 01:19</text>
<text x="203.5" y="566" font-size="9.8" text-rendering="geometricPrecision" fill="#fff" stroke="#fff" stroke-width="0.2" textLength="54.1" lengthAdjust="spacingAndGlyphs">26 Dec 01:27</text>
<text x="267.5" y="566" font-size="9.8" text-rendering="geometricPrecision" fill="#fff" stroke="#fff" stroke-width="0.2" textLength="54.1" lengthAdjust="spacingAndGlyphs">26 Dec 01:35</text>
<text x="331.5" y="566" font-size="9.8" text-rendering="geometricPrecision" fill="#fff" stroke="#fff" stroke-width="0.2" textLength="54.1" lengthAdjust="spacingAndGlyphs">26 Dec 01:43</text>
<text x="395.5" y="566" font-size="9.8" text-rendering="geometricPrecision" fill="#fff" stroke="#fff" stroke-width="0.2" textLength="54.1" lengthAdjust="spacingAndGlyphs">26 Dec 01:51</text>
<g shape-rendering="crispEdges">
<rect x="10" y="12" width="12" height="9" fill="#4786f6"/><rect x="11" y="14" width="10" height="6" fill="#fff"/>
<rect x="12" y="16" width="1" height="1" fill="#4786f6"/>
<rect x="13" y="15" width="1" height="1" fill="#4786f6"/>
<rect x="13" y="16" width="1" height="1" fill="#4786f6"/>
<rect x="14" y="16" width="1" height="1" fill="#4786f6"/>
<rect x="16" y="15" width="1" height="1" fill="#4786f6"/>
<rect x="16" y="16" width="1" height="1" fill="#4786f6"/>
<rect x="17" y="16" width="1" height="1" fill="#4786f6"/>
<rect x="17" y="15" width="1" height="1" fill="#4786f6"/>
<rect x="18" y="17" width="1" height="1" fill="#4786f6"/>
<rect x="18" y="16" width="1" height="1" fill="#4786f6"/>
<rect x="13" y="17" width="11" height="9" fill="#4786f6"/><rect x="14" y="19" width="9" height="6" fill="#fff"/>
<rect x="15" y="20" width="1" height="1" fill="#4786f6"/>
<rect x="16" y="21" width="1" height="1" fill="#4786f6"/>
<rect x="16" y="22" width="1" height="1" fill="#4786f6"/>
<rect x="17" y="23" width="1" height="1" fill="#4786f6"/>
<rect x="18" y="22" width="1" height="1" fill="#4786f6"/>
<rect x="18" y="21" width="1" height="1" fill="#4786f6"/>
<rect x="19" y="20" width="1" height="1" fill="#4786f6"/>
<rect x="20" y="21" width="1" height="1" fill="#4786f6"/>
<rect x="20" y="22" width="1" height="1" fill="#4786f6"/>
<rect x="21" y="23" width="1" height="1" fill="#4786f6"/>
</g>
<text x="29.5" y="24" font-size="12.4" fill="#fff" stroke="#fff" stroke-width="3" stroke-opacity="0.25" textLength="58.3" lengthAdjust="spacingAndGlyphs">USDJPY,M1</text>
<text x="29.5" y="24" font-size="12.4" fill="#0c0c14" stroke="#0c0c14" stroke-width="0.08" textLength="58.3" lengthAdjust="spacingAndGlyphs">USDJPY,M1</text>
<rect x="623.5" y="9.5" width="33" height="19" rx="3.5" ry="3.5" fill="none" stroke="#ffffff" stroke-opacity="0.3"/>
<rect x="624.5" y="10.5" width="31" height="17" rx="2.5" ry="2.5" fill="url(#btn)" stroke="#5b6f8c"/>
<rect x="625.5" y="11.5" width="29" height="15" rx="1.5" ry="1.5" fill="none" stroke="#e8f0fa" stroke-opacity="0.55"/>
<rect x="657.5" y="9.5" width="33" height="19" rx="3.5" ry="3.5" fill="none" stroke="#ffffff" stroke-opacity="0.3"/>
<rect x="658.5" y="10.5" width="31" height="17" rx="2.5" ry="2.5" fill="url(#btn)" stroke="#5b6f8c"/>
<rect x="659.5" y="11.5" width="29" height="15" rx="1.5" ry="1.5" fill="none" stroke="#e8f0fa" stroke-opacity="0.55"/>
<rect x="691.5" y="9.5" width="33" height="19" rx="3.5" ry="3.5" fill="none" stroke="#ffffff" stroke-opacity="0.3"/>
<rect x="692.5" y="10.5" width="31" height="17" rx="2.5" ry="2.5" fill="url(#cls)" stroke="#4a1a22"/>
<rect x="693.5" y="11.5" width="29" height="15" rx="1.5" ry="1.5" fill="none" stroke="#f6c9bf" stroke-opacity="0.55"/>
<rect x="634.5" y="18.5" width="10" height="4" rx="1" fill="#f2f4f8" stroke="#4a566c"/>
<rect x="668.5" y="14.5" width="10" height="8" rx="1" fill="#f2f4f8" stroke="#4a566c"/>
<rect x="671.5" y="17.5" width="4" height="2" fill="#8fa9cf" stroke="#4a566c"/>
<polygon points="702.30,14.30 706.20,14.30 708.00,16.80 709.80,14.30 713.70,14.30 709.90,18.50 713.70,22.70 709.80,22.70 708.00,20.20 706.20,22.70 702.30,22.70 706.10,18.50" fill="#f7f5f6" stroke="#4b2f3a" stroke-width="1.1" stroke-linejoin="round"/>
</svg>
</body></html>
